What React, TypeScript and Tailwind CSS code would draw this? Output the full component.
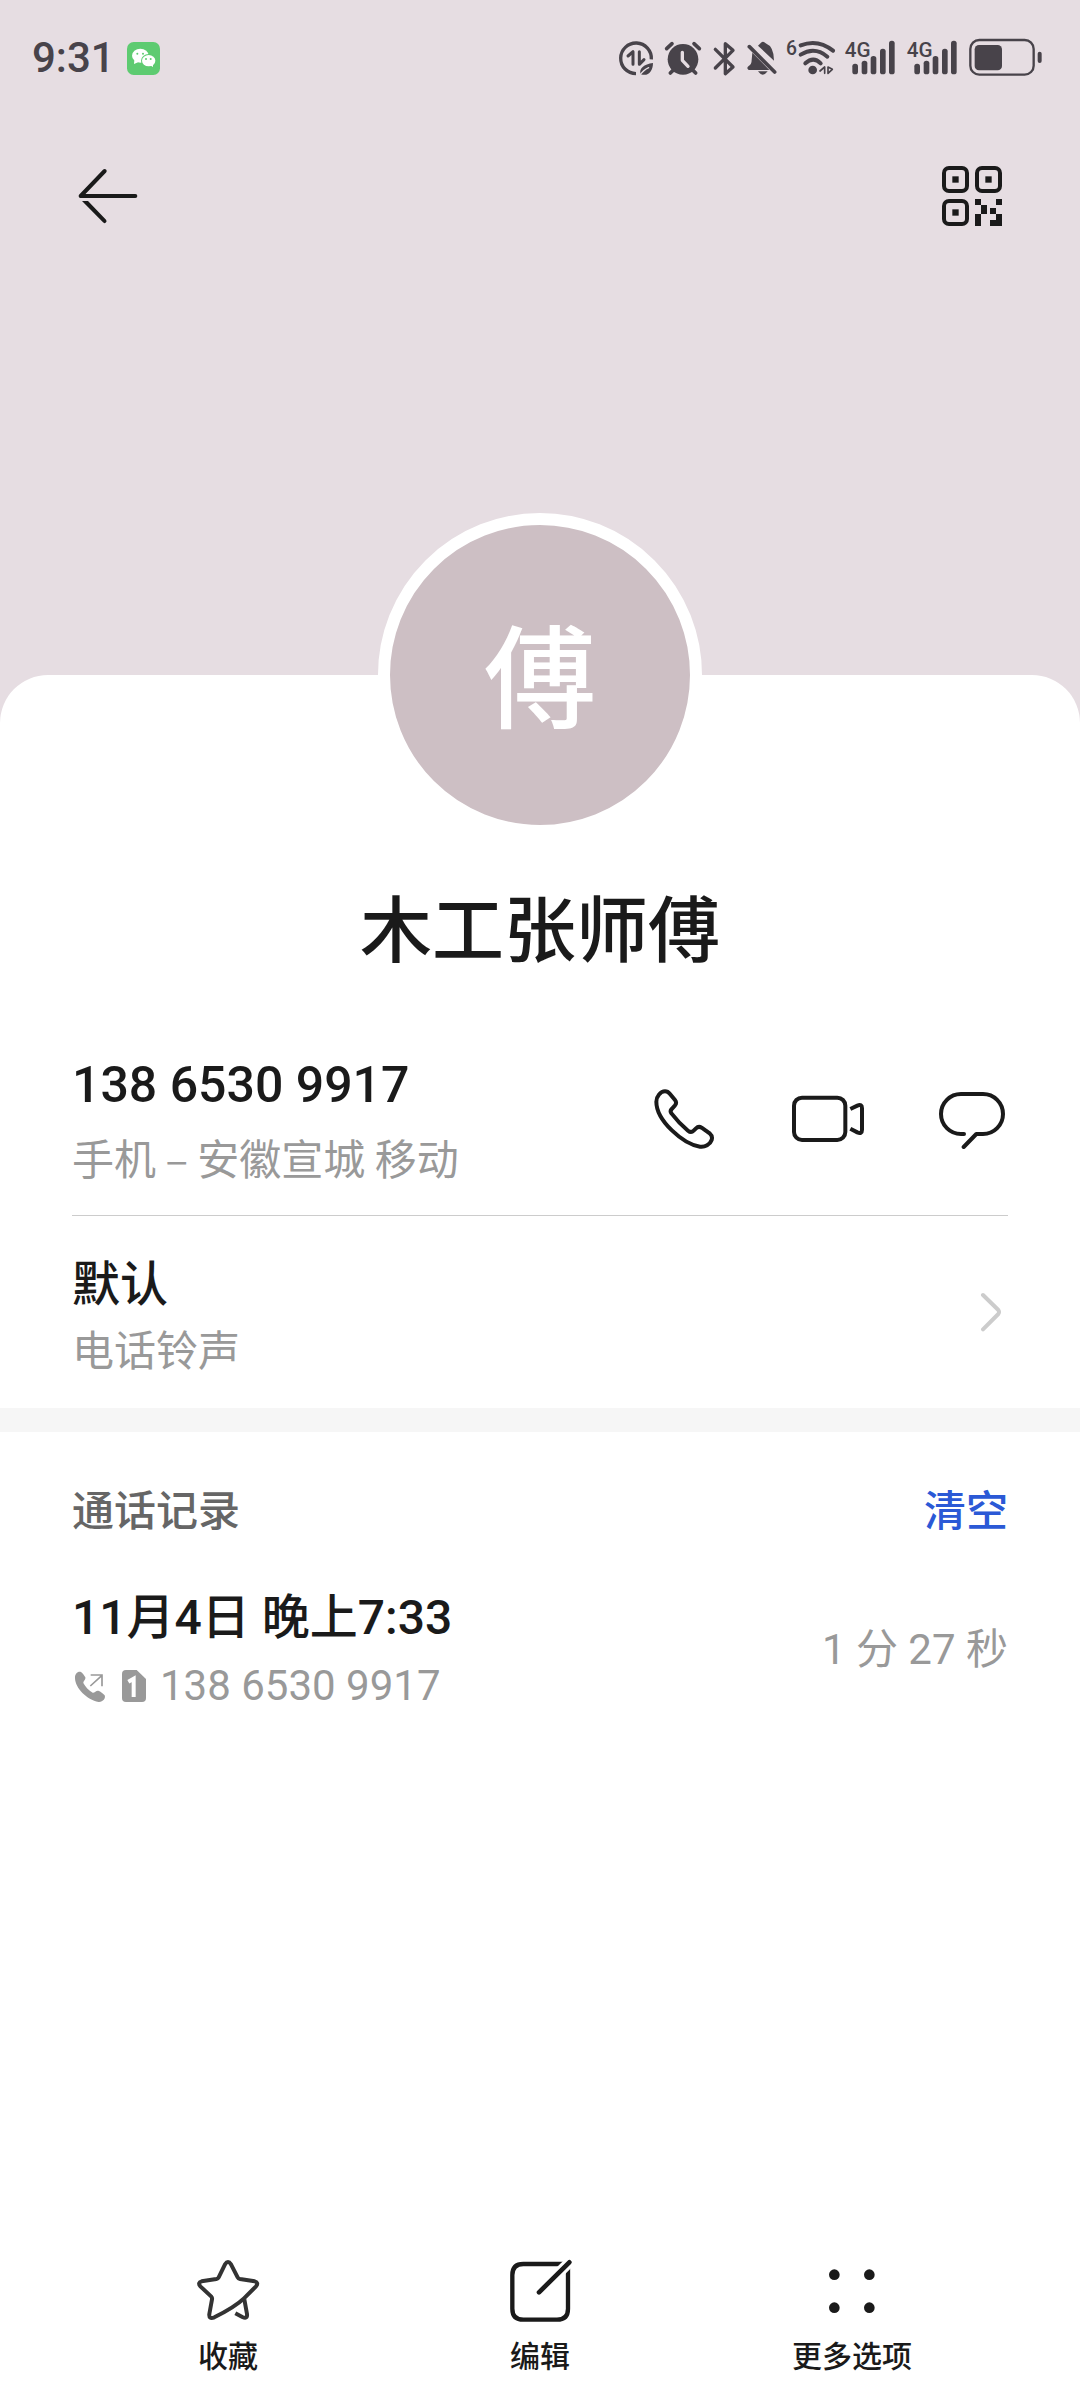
const SignalIcon = () => {
  return (
    <svg className="w-[54px] h-[40px] font-[Roboto,sans-serif]" viewBox="72 54 162 120" fill="#48434a">
      <text x="74" y="110" fontSize="62" fontWeight="500">
        4G
      </text>
      <rect x="97" y="131" width="17" height="32" rx="8" />
      <rect x="125" y="122" width="17" height="41" rx="8" />
      <rect x="152" y="108" width="17" height="55" rx="8" />
      <rect x="180" y="86" width="17" height="77" rx="8" />
      <rect x="207" y="62" width="17" height="101" rx="8" />
    </svg>
  );
};

const StatusBar = () => {
  return (
    <div className="w-full h-[116px] flex items-center justify-between pl-8 pr-9">
      {/* time */}
      <div className="flex items-center gap-3">
        <span className="text-[42px] leading-[56px] font-medium text-[#48434a] font-[Roboto,sans-serif]">
          9:31
        </span>
        <svg className="w-[33px] h-[33px]" viewBox="381 66 99 99">
          <rect x="381" y="66" width="99" height="99" rx="20" fill="#5ecb71" />
          <ellipse cx="421" cy="107" rx="25" ry="21" fill="#fff" />
          <path d="M403 120 L402 132 L416 126Z" fill="#fff" />
          <ellipse cx="446" cy="122" rx="23" ry="20" fill="#5ecb71" />
          <ellipse cx="446" cy="122" rx="20" ry="17" fill="#fff" />
          <path d="M450 136 L459 141 L459 132Z" fill="#fff" />
          <circle cx="412" cy="101" r="3" fill="#5ecb71" />
          <circle cx="429" cy="101" r="3" fill="#5ecb71" />
          <circle cx="438" cy="117" r="3" fill="#5ecb71" />
          <circle cx="452" cy="117" r="3" fill="#5ecb71" />
        </svg>
      </div>

      {/* system icons */}
      <div className="flex items-center gap-2">
        {/* data saver */}
        <svg className="w-[36px] h-[40px]" viewBox="54 54 108 120" fill="none" stroke="#48434a" strokeLinecap="round" strokeLinejoin="round">
          <path d="M108 161 A46 46 0 1 1 154 118" strokeWidth="10" strokeLinecap="butt" />
          <path d="M84 108 L99 95 V133" strokeWidth="9" />
          <path d="M118 95 V133 L132 119" strokeWidth="9" />
          <path d="M122 163 C116 146 132 132 159 129 C159 152 146 168 128 164Z" fill="#48434a" stroke="none" />
          <path d="M118 168 Q130 150 146 143" stroke="#e6dde2" strokeWidth="4" />
        </svg>
        {/* alarm */}
        <svg className="w-[40px] h-[40px]" viewBox="186 54 120 120" fill="none" stroke="#48434a" strokeWidth="11" strokeLinecap="round">
          <circle cx="249" cy="118" r="46" fill="#48434a" stroke="none" />
          <path d="M200 86 L216 71 M282 71 L298 86 M211 159 L222 148 M287 159 L276 148" />
          <path d="M247 97 V121 L264 139" stroke="#e6dde2" strokeWidth="10" strokeLinejoin="round" />
        </svg>
        {/* bluetooth */}
        <svg className="w-[26px] h-[40px]" viewBox="330 54 78 120" fill="none" stroke="#48434a" strokeWidth="10" strokeLinecap="round" strokeLinejoin="round">
          <path d="M346 88 L399 141 L376 161 V71 L399 91 L346 144" />
        </svg>
        {/* muted */}
        <svg className="w-[34px] h-[40px]" viewBox="432 54 102 120" fill="#48434a">
          <path d="M457 98 L508 150 H446 Q438 144 446 138 Q455 134 455 120Z" />
          <path d="M474 77 Q480 71 483 68 Q490 62 497 70 Q522 80 522 122Z" />
          <path d="M474 154 H503 Q488 174 474 154Z" />
          <path d="M448 80 L524 156" stroke="#48434a" strokeWidth="11" strokeLinecap="round" />
        </svg>
        {/* wifi */}
        <svg className="w-[50px] h-[40px] font-[Roboto,sans-serif]" viewBox="558 54 150 120" fill="none" stroke="#48434a" strokeWidth="12" strokeLinecap="round">
          <text x="558" y="104" fontSize="58" fontWeight="500" fill="#48434a" stroke="none">
            6
          </text>
          <path d="M602 76 Q654 56 699 92" />
          <path d="M602 104 Q644 78 682 110" />
          <path d="M616 130 Q640 108 662 130" />
          <circle cx="638" cy="150" r="13" fill="#48434a" stroke="none" />
          <path d="M660 153 L674 141 V160 M684 160 V141 L697 148 L684 160" strokeWidth="5" strokeLinejoin="round" />
        </svg>
        <SignalIcon />
        <SignalIcon />
        {/* battery */}
        <svg className="w-[76px] h-[40px]" viewBox="444 54 228 120" fill="#48434a">
          <rect x="451" y="60" width="190" height="104" rx="27" fill="none" stroke="#48434a" strokeWidth="7" />
          <rect x="464" y="75" width="82" height="76" rx="13" />
          <rect x="653" y="95" width="12" height="34" rx="6" />
        </svg>
      </div>
    </div>
  );
};

const NavBar = () => {
  return (
    <div className="w-full flex items-center justify-between pt-[50px] pl-[76px] pr-[78px]">
      <button type="button" aria-label="返回">
        <svg className="w-[64px] h-[60px]" viewBox="48 78 192 180">
          <path d="M134 93 L62 168 H226" fill="none" stroke="#1a1a1a" strokeWidth="12" strokeLinecap="round" strokeLinejoin="round" />
          <path d="M66 183 H84 L138 239 A6 6 0 0 1 129 247Z" fill="#1a1a1a" />
        </svg>
      </button>
      <button type="button" aria-label="二维码">
        <svg className="w-[60px] h-[60px]" viewBox="66 48 180 180" fill="#1a1a1a">
          <g fill="none" stroke="#1a1a1a" strokeWidth="12">
            <rect x="72" y="54" width="69" height="69" rx="15" />
            <rect x="171" y="54" width="69" height="69" rx="15" />
            <rect x="72" y="153" width="69" height="69" rx="15" />
          </g>
          <rect x="97" y="79" width="19" height="19" />
          <rect x="196" y="79" width="19" height="19" />
          <rect x="97" y="178" width="19" height="19" />
          <rect x="165" y="147" width="18" height="18" />
          <rect x="228" y="147" width="18" height="18" />
          <rect x="183" y="165" width="18" height="27" />
          <rect x="210" y="174" width="18" height="18" />
          <rect x="165" y="192" width="18" height="36" />
          <rect x="228" y="192" width="18" height="36" />
          <rect x="210" y="210" width="18" height="18" />
        </svg>
      </button>
    </div>
  );
};

const ContactActions = () => {
  return (
    <div className="flex items-center gap-[74px]">
      <button type="button" aria-label="拨打电话">
        <svg className="w-[64px] h-[60px]" viewBox="102 90 192 180" fill="none" stroke="#1a1a1a" strokeWidth="12">
          <path d="M109 128 C109 112 122 97 135 97 C141 97 146 100 150 105 L165 123 C169 128 169 134 165 139 L155 150 C151 154 151 159 155 164 C170 184 186 200 204 215 C210 220 216 220 221 215 L228 208 C233 203 240 203 245 206 L270 224 C276 229 277 236 275 243 C270 257 255 265 240 263 C190 256 109 185 109 128Z" />
        </svg>
      </button>
      <button type="button" aria-label="视频通话">
        <svg className="w-[72px] h-[60px]" viewBox="516 90 216 180" fill="none" stroke="#1a1a1a" strokeWidth="12">
          <rect x="522" y="116" width="154" height="127" rx="24" />
          <path d="M691 150 L712 140 Q726 134 726 148 V212 Q726 226 712 220 L691 209" />
        </svg>
      </button>
      <button type="button" aria-label="发送信息">
        <svg className="w-[70px] h-[60px]" viewBox="954 90 210 180" fill="none" stroke="#1a1a1a" strokeWidth="12" strokeLinecap="round" strokeLinejoin="round">
          <path d="M1032 225 H1023 A60 60 0 0 1 1023 105 H1089 A60 60 0 0 1 1089 225 H1069 L1031 264" />
        </svg>
      </button>
    </div>
  );
};

const CallLog = () => {
  return (
    <section className="w-full px-[72px] pt-12">
      <div className="flex items-center justify-between text-[42px] leading-[56px] font-medium">
        <h2 className="text-[#666666]">通话记录</h2>
        <button type="button" className="text-[#2b59d6]">
          清空
        </button>
      </div>

      <div className="flex items-center justify-between mt-[50px] font-[Roboto,'Noto_Sans_CJK_SC',sans-serif]">
        <div className="flex flex-col gap-2">
          <span className="text-[48px] leading-[64px] font-medium">
            11月4日 晚上7:33
          </span>
          <div className="flex items-center">
            {/* outgoing call */}
            <svg className="w-[34px] h-[33px]" viewBox="96 801 102 99" fill="#999999">
              <path d="M105 826 C104 812 114 804 123 807 C128 810 132 817 136 823 C138 830 130 834 130 840 C136 852 146 862 158 869 C164 870 168 862 175 863 C182 866 189 871 194 877 C198 886 188 898 176 897 C140 890 106 856 105 826Z" />
              <path d="M151 849 L186 817 M152 816 H186 V850" fill="none" stroke="#999999" strokeWidth="5" />
            </svg>
            {/* sim card */}
            <svg className="w-[24px] h-[32px] ml-4" viewBox="249 804 72 96">
              <path d="M261 804 H293 L321 831 V888 Q321 900 309 900 H261 Q249 900 249 888 V816 Q249 804 261 804Z" fill="#999999" />
              <path d="M268 839 L284 830 V885" fill="none" stroke="#ffffff" strokeWidth="12" />
            </svg>
            <span className="ml-[14px] text-[42px] leading-[56px] text-[#999999]">
              138 6530 9917
            </span>
          </div>
        </div>
        <span className="text-[42px] leading-[56px] text-[#999999]">
          1 分 27 秒
        </span>
      </div>
    </section>
  );
};

const BottomBar = () => {
  return (
    <nav className="w-full mt-auto px-[72px] pb-[26px] grid grid-cols-3 text-[30px] leading-[40px] font-medium">
      <button type="button" className="flex flex-col items-center gap-2">
        <svg className="w-[72px] h-[72px]" viewBox="66 42 216 216" fill="none" stroke="#333333" strokeWidth="12" strokeLinecap="round" strokeLinejoin="round">
          <path d="M165 73 Q174 59 183 73 L203 112 Q205 116 210 117 L254 124 Q267 128 258 139 L222 175 Q196 200 133 232 Q116 239 118 222 L126 178 Q127 174 124 170 L91 139 Q82 128 95 124 L139 117 Q144 116 146 112Z" />
          <path d="M223 178 L231 222 Q233 238 217 231 L196 220" strokeLinecap="butt" />
        </svg>
        <span>收藏</span>
      </button>
      <button type="button" className="flex flex-col items-center gap-2">
        <svg className="w-[72px] h-[72px]" viewBox="1002 42 216 216" fill="none" stroke="#1a1a1a" strokeWidth="13">
          <path d="M1180 72 H1060 Q1027 72 1027 105 V206 Q1027 239 1060 239 H1161 Q1194 239 1194 206 V84" />
          <path d="M1150 115 L1215 50" stroke="#ffffff" strokeWidth="32" />
          <path d="M1107 157 L1198 67" strokeWidth="14" strokeLinecap="round" />
        </svg>
        <span>编辑</span>
      </button>
      <button type="button" className="flex flex-col items-center gap-2">
        <svg className="w-[72px] h-[72px]" viewBox="168 42 216 216" fill="#1a1a1a">
          <circle cx="223" cy="104" r="16" />
          <circle cx="328" cy="104" r="16" />
          <circle cx="223" cy="203" r="16" />
          <circle cx="328" cy="203" r="16" />
        </svg>
        <span>更多选项</span>
      </button>
    </nav>
  );
};

const App = () => {
  return (
    <div className="w-full min-h-screen flex flex-col bg-[#e6dde2] text-[#1a1a1a] font-['Noto_Sans_CJK_SC',sans-serif]">
      <header className="w-full h-[675px]">
        <StatusBar />
        <NavBar />
      </header>

      <main className="w-full flex-1 flex flex-col bg-white rounded-t-[48px]">
        {/* avatar */}
        <div className="w-[324px] h-[324px] -mt-[162px] mx-auto pb-2 flex justify-center items-center rounded-full border-12 border-white bg-[#cdbfc4] text-white text-[112px] leading-[160px] font-medium">
          傅
        </div>
        <h1 className="mt-10 text-center text-[72px] leading-[96px] font-medium">
          木工张师傅
        </h1>

        <section className="w-full px-[72px] pt-20">
          {/* number */}
          <div className="flex items-center justify-between pb-[30px] border-b-1 border-[#cccccc]">
            <div className="flex flex-col gap-3">
              <span className="text-[50px] leading-[64px] font-medium font-[Roboto,sans-serif]">
                138 6530 9917
              </span>
              <span className="text-[42px] leading-[56px] text-[#999999]">
                手机 – 安徽宣城 移动
              </span>
            </div>
            <ContactActions />
          </div>

          {/* ringtone */}
          <button
            type="button"
            className="w-full flex items-center justify-between text-left py-8"
          >
            <span className="flex flex-col gap-2">
              <span className="text-[48px] leading-[64px] font-medium">
                默认
              </span>
              <span className="text-[42px] leading-[56px] text-[#999999]">
                电话铃声
              </span>
            </span>
            <svg className="w-[28px] h-[40px]" viewBox="1080 699 84 120" fill="none" stroke="#cccccc" strokeWidth="12" strokeLinecap="round" strokeLinejoin="round">
              <path d="M1089 708 L1135 753 Q1139 759 1135 765 L1089 811" />
            </svg>
          </button>
        </section>

        <div className="w-full h-6 bg-[#f6f6f6]" />

        <CallLog />
        <BottomBar />
      </main>
    </div>
  );
};

export default App;
